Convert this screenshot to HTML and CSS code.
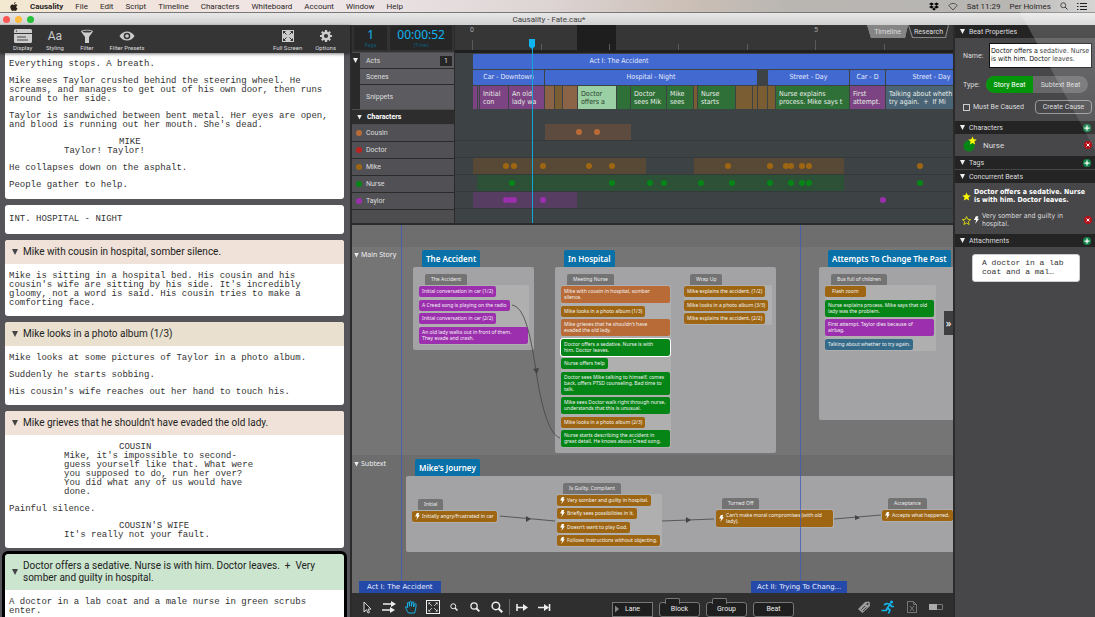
FILE: index.html
```html
<!DOCTYPE html>
<html lang="en-us">
  <head>
    <meta charset="utf-8">
    <meta name="viewport" content="width=device-width">
    <title>Causality - Fate.cau*</title>
    <link rel="stylesheet" href="styles.css">
  </head>
  <body>
    <svg class="defs" aria-hidden="true">
      <symbol id="bolt" viewBox="0 0 8 12"><path fill="currentColor" d="M3 0h4L5.500 4H8L2 12l1.500-6H0z"/></symbol>
      <symbol id="star" viewBox="0 0 24 24"><path d="M12 1.500l3.200 7.400 8 .7-6.100 5.300 1.900 7.900-7-4.200-7 4.200 1.900-7.900L.8 9.600l8-.7z"/></symbol>
      <symbol id="plus" viewBox="0 0 16 16"><circle cx="8" cy="8" r="8" fill="#14854a"/><path d="M8 3v10M3 8h10" stroke="#fff" stroke-width="2.500"/></symbol>
      <symbol id="cross" viewBox="0 0 16 16"><circle cx="8" cy="8" r="8" fill="#b5121b"/><path d="M5 5l6 6M11 5l-6 6" stroke="#fff" stroke-width="2"/></symbol>
      <symbol id="lens" viewBox="0 0 16 16"><circle cx="6.500" cy="6.500" r="5" fill="none" stroke="currentColor" stroke-width="2"/><path d="M10 10l5 5" stroke="currentColor" stroke-width="3"/></symbol>
      <symbol id="fit" viewBox="0 0 16 16"><path d="M6.500 6.500L3 3M9.500 6.500L13 3M6.500 9.500L3 13M9.500 9.500L13 13" stroke="currentColor"/><path fill="currentColor" d="M2 2h3L2 5zM14 2v3l-3-3zM2 14v-3l3 3zM14 14h-3l3-3z"/></symbol>
    </svg>

    <nav class="menubar">
      <svg class="apple" viewBox="0 0 16 18"><path fill="#2b2219" d="M11.300 0c.1 1.800-1.500 3.700-3.300 3.700C7.800 1.900 9.600.2 11.300 0zM15 13.200c-.9 2.300-2.300 4.600-3.900 4.600-1.100 0-1.500-.7-2.900-.7s-1.800.7-2.900.7C3 17.800.6 13 .6 9.800c0-3.200 2-5 4.100-5 1.300 0 2.400.8 3.300.8.800 0 2-.9 3.600-.9 1.300 0 2.500.7 3.100 1.700-3 1.800-2.500 5.700.3 6.800z"/></svg>
      <button class="menu app">Causality</button>
      <button class="menu">File</button>
      <button class="menu">Edit</button>
      <button class="menu">Script</button>
      <button class="menu">Timeline</button>
      <button class="menu">Characters</button>
      <button class="menu">Whiteboard</button>
      <button class="menu">Account</button>
      <button class="menu">Window</button>
      <button class="menu">Help</button>
      <div class="status">
        <svg class="tray" viewBox="0 0 20 18"><path d="M5 1l5 3-5 3-5-3zM15 1l5 3-5 3-5-3zM5 7l5 3-5 3-5-3zM15 7l5 3-5 3-5-3zM10 11.500l4 2.500-4 3-4-3z"/></svg>
        <svg class="tray" viewBox="0 0 20 16"><path fill="none" stroke="#333" stroke-width="1.500" d="M1.500 6C6 .5 14 .5 18.500 6L10 15z"/></svg>
        <span>Sat 11:29</span>
        <span>Per Holmes</span>
        <svg class="glass" viewBox="0 0 16 16"><circle cx="6.500" cy="6.500" r="5" fill="none" stroke="#333" stroke-width="1.600"/><path d="M10 10l5 5" stroke="#333" stroke-width="2"/></svg>
        <svg class="tray" viewBox="0 0 20 16"><path d="M0 2h3M0 8h3M0 14h3M6 2h14M6 8h14M6 14h14" stroke="#222" stroke-width="2"/></svg>
      </div>
    </nav>

    <header class="titlebar">
      <i class="light red"></i><i class="light amber"></i><i class="light green"></i>
      <h1>Causality - Fate.cau*</h1>
    </header>

    <div class="window">
      <section class="script">
        <div class="toolbar">
          <button class="tool">
            <svg viewBox="0 0 18 14"><path fill="#ccc" d="M1 0h16l1 1v3H0V1zM0 5h18v8l-1 1H1l-1-1z"/><path d="M3 8h9M3 11h11" stroke="#444"/><circle cx="2.500" cy="2" r=".8" fill="#444"/></svg>
            Display
          </button>
          <button class="tool">
            <span class="aa">Aa</span>
            Styling
          </button>
          <button class="tool">
            <svg viewBox="0 0 18 14"><path fill="#ccc" d="M3 2.500C3 0 15 0 15 2.500L11 8v6H7V8z"/><ellipse cx="9" cy="2.500" rx="4.500" ry="1" fill="#3a3a3a"/></svg>
            Filter
          </button>
          <button class="tool">
            <svg viewBox="0 0 18 14"><path fill="#ccc" d="M1.500 7C5 1 13 1 16.500 7 13 13 5 13 1.500 7z"/><circle cx="9" cy="7" r="3.300" fill="#353536"/><circle cx="9" cy="7" r="1.800" fill="#ccc"/></svg>
            Filter Presets
          </button>
          <button class="tool push">
            <svg viewBox="0 0 18 14"><path fill="#ccc" d="M3 1h12v12H3z"/><path d="M5 3l2.500 2.500M13 3l-2.500 2.500M5 11l2.500-2.500M13 11l-2.500-2.500" stroke="#333"/><path fill="#333" d="M4 2h3L4 5zM14 2v3l-3-3zM4 12V9l3 3zM14 12h-3l3-3z"/></svg>
            Full Screen
          </button>
          <button class="tool">
            <svg viewBox="0 0 18 14"><circle cx="9" cy="7" r="3.300" fill="none" stroke="#ccc" stroke-width="2.400"/><path stroke="#ccc" stroke-width="2.200" d="M9 1v2M9 11v2M3 7h2M13 7h2M4.800 2.800l1.400 1.400M11.800 9.800l1.400 1.400M13.200 2.800l-1.400 1.400M6.200 9.800l-1.400 1.400"/></svg>
            Options
          </button>
        </div>
        <div class="pages">
          <article class="card opening">
            <div class="text">
              <p>Everything stops. A breath.</p>
              <p>Mike sees Taylor crushed behind the steering wheel. He screams, and manages to get out of his own door, then runs around to her side.</p>
              <p>Taylor is sandwiched between bent metal. Her eyes are open, and blood is running out her mouth. She's dead.</p>
              <p class="cue">MIKE</p>
              <p class="speech">Taylor! Taylor!</p>
              <p>He collapses down on the asphalt.</p>
              <p>People gather to help.</p>
            </div>
          </article>
          <article class="card slug">
            <div class="text"><p>INT. HOSPITAL - NIGHT</p></div>
          </article>
          <article class="card">
            <h2 class="peach"><i class="tri"></i>Mike with cousin in hospital, somber silence.</h2>
            <div class="text">
              <p>Mike is sitting in a hospital bed. His cousin and his cousin's wife are sitting by his side. It's incredibly gloomy, not a word is said. His cousin tries to make a comforting face.</p>
            </div>
          </article>
          <article class="card">
            <h2 class="sand"><i class="tri"></i>Mike looks in a photo album (1/3)</h2>
            <div class="text">
              <p>Mike looks at some pictures of Taylor in a photo album.</p>
              <p>Suddenly he starts sobbing.</p>
              <p>His cousin's wife reaches out her hand to touch his.</p>
            </div>
          </article>
          <article class="card">
            <h2 class="peach"><i class="tri"></i>Mike grieves that he shouldn't have evaded the old lady.</h2>
            <div class="text">
              <p class="cue">COUSIN</p>
              <p class="speech">Mike, it's impossible to second-guess yourself like that. What were you supposed to do, run her over? You did what any of us would have done.</p>
              <p>Painful silence.</p>
              <p class="cue">COUSIN'S WIFE</p>
              <p class="speech">It's really not your fault.</p>
            </div>
          </article>
          <article class="card current">
            <h2 class="mint"><i class="tri"></i>Doctor offers a sedative. Nurse is with him. Doctor leaves. &nbsp;+&nbsp; Very somber and guilty in hospital.</h2>
            <div class="text">
              <p>A doctor in a lab coat and a male nurse in green scrubs enter.</p>
            </div>
          </article>
        </div>
      </section>

      <main class="stage">
        <section class="timeline">
          <div class="labels">
            <div class="counters">
              <div class="counter"><b>1</b><small>Page</small></div>
              <div class="counter wide"><b>00:00:52</b><small>(Time)</small></div>
            </div>
            <div class="levels">
              <i class="tri light-tri"></i>
              <div class="level">Acts <span class="depth">1</span></div>
              <div class="level">Scenes</div>
              <div class="level tall">Snippets</div>
            </div>
            <div class="people"><i class="tri light-tri"></i>Characters</div>
            <div class="person"><i class="dot cousin"></i>Cousin</div>
            <div class="person"><i class="dot doctor"></i>Doctor</div>
            <div class="person"><i class="dot mike"></i>Mike</div>
            <div class="person"><i class="dot nurse"></i>Nurse</div>
            <div class="person"><i class="dot taylor"></i>Taylor</div>
          </div>
          <div class="tracks">
            <div class="ruler">
              <i class="range" style="left:122px;width:39px"></i>
              <span class="mark" style="left:15px">0</span>
              <span class="mark" style="left:359px">5</span>
              <i class="tick long" style="left:17px"></i>
              <i class="tick" style="left:86px"></i>
              <i class="tick" style="left:154px"></i>
              <i class="tick" style="left:223px"></i>
              <i class="tick" style="left:292px"></i>
              <i class="tick long" style="left:360px"></i>
              <i class="tick" style="left:429px"></i>
              <div class="tabs">
                <button class="tab on">Timeline</button>
                <button class="tab">Research</button>
              </div>
            </div>
            <div class="row acts"><div class="clip fill">Act I: The Accident</div></div>
            <div class="row scenes">
              <div class="clip" style="width:71px">Car - Downtown</div>
              <div class="clip" style="width:212px">Hospital - Night</div>
              <div class="clip none" style="width:9px"></div>
              <div class="clip" style="width:81px">Street - Day</div>
              <div class="clip" style="width:35px">Car - D</div>
              <div class="clip fill street">Street - Day</div>
            </div>
            <div class="row snippets">
              <div class="snip s-taylor" style="width:4px"></div>
              <div class="snip s-taylor" style="width:1px"></div>
              <div class="snip s-taylor" style="width:28px">Initial con</div>
              <div class="snip s-taylor" style="width:35px">An old lady wa</div>
              <div class="snip s-cousin" style="width:9px"></div>
              <div class="snip s-mike" style="width:7px"></div>
              <div class="snip s-cousin" style="width:14px"></div>
              <div class="snip s-now" style="width:38px">Doctor offers a</div>
              <div class="snip s-nurse" style="width:13px"></div>
              <div class="snip s-nurse cut" style="width:35px">Doctor<br>sees Mik</div>
              <div class="snip s-nurse" style="width:26px">Mike sees</div>
              <div class="snip s-mike" style="width:3px"></div>
              <div class="snip s-nurse" style="width:37px">Nurse starts</div>
              <div class="snip s-mike" style="width:16px"></div>
              <div class="snip s-mike" style="width:4px"></div>
              <div class="snip s-mike" style="width:9px"></div>
              <div class="snip s-mike" style="width:7px"></div>
              <div class="snip s-nurse cut" style="width:73px">Nurse explains<br>process. Mike says t</div>
              <div class="snip s-taylor" style="width:35px">First attempt.</div>
              <div class="snip s-talk cut fill">Talking about wheth<br>try again. &nbsp;+&nbsp; If Mi</div>
            </div>
            <div class="lane head"></div>
            <div class="lane">
              <i class="band b-cousin" style="left:90px;width:86px"></i>
              <i class="dot cousin" style="left:121px"></i><i class="dot cousin" style="left:139px"></i>
            </div>
            <div class="lane"></div>
            <div class="lane">
              <i class="band b-mike" style="left:18px;width:173px"></i><i class="band b-mike" style="left:239px;width:150px"></i>
              <i class="dot mike" style="left:48px"></i><i class="dot mike" style="left:56px"></i><i class="dot mike" style="left:85px"></i><i class="dot mike" style="left:131px"></i><i class="dot mike" style="left:154px"></i><i class="dot mike" style="left:270px"></i><i class="dot mike" style="left:312px"></i><i class="dot mike" style="left:328px"></i><i class="dot mike" style="left:333px"></i><i class="dot mike" style="left:344px"></i><i class="dot mike" style="left:351px"></i><i class="dot mike" style="left:462px"></i>
            </div>
            <div class="lane">
              <i class="band b-nurse" style="left:22px;width:367px"></i>
              <i class="dot nurse" style="left:54px"></i><i class="dot nurse" style="left:154px"></i><i class="dot nurse" style="left:192px"></i><i class="dot nurse" style="left:206px"></i><i class="dot nurse" style="left:243px"></i><i class="dot nurse" style="left:274px"></i><i class="dot nurse" style="left:312px"></i><i class="dot nurse" style="left:333px"></i><i class="dot nurse" style="left:344px"></i><i class="dot nurse" style="left:351px"></i><i class="dot nurse" style="left:462px"></i>
            </div>
            <div class="lane">
              <i class="band b-taylor" style="left:18px;width:104px"></i>
              <i class="dot taylor" style="left:48px"></i><i class="dot taylor" style="left:53px"></i><i class="dot taylor" style="left:56px"></i><i class="dot taylor" style="left:85px"></i><i class="dot taylor" style="left:425px"></i>
            </div>
            <div class="playhead" style="left:77px"></div>
          </div>
        </section>

        <section class="board">
          <div class="strip"></div>
          <div class="story"><span class="story-name"><i class="tri light-tri"></i>Main Story</span></div>
          <div class="story sub"><span class="story-name"><i class="tri light-tri"></i>Subtext</span></div>

          <div class="block accident">
            <h3>The Accident</h3>
            <div class="area">
              <div class="scene">
                <h4>The Accident</h4>
                <div class="beats">
                  <p class="beat taylor">Initial conversation in car (1/2)</p>
                  <p class="beat taylor">A Creed song is playing on the radio</p>
                  <p class="beat taylor">Initial conversation in car (2/2)</p>
                  <p class="beat taylor long">An old lady walks out in front of them.<br>They evade and crash.</p>
                </div>
              </div>
            </div>
          </div>

          <div class="block hospital">
            <h3>In Hospital</h3>
            <div class="area">
              <div class="scene">
                <h4>Meeting Nurse</h4>
                <div class="beats">
                  <p class="beat cousin long">Mike with cousin in hospital, somber silence.</p>
                  <p class="beat mike">Mike looks in a photo album (1/3)</p>
                  <p class="beat cousin long">Mike grieves that he shouldn't have<br>evaded the old lady.</p>
                  <p class="beat nurse long picked">Doctor offers a sedative. Nurse is with<br>him. Doctor leaves.</p>
                  <p class="beat nurse">Nurse offers help</p>
                  <p class="beat nurse long">Doctor sees Mike talking to himself, comes back, offers PTSD counseling. Bad time to talk.</p>
                  <p class="beat nurse long">Mike sees Doctor walk right through nurse, understands that this is unusual.</p>
                  <p class="beat mike">Mike looks in a photo album (2/3)</p>
                  <p class="beat nurse long">Nurse starts describing the accident in great detail. He knows about Creed song.</p>
                </div>
              </div>
              <div class="scene">
                <h4>Wrap Up</h4>
                <div class="beats">
                  <p class="beat mike">Mike explains the accident. (1/2)</p>
                  <p class="beat mike">Mike looks in a photo album (3/3)</p>
                  <p class="beat mike">Mike explains the accident. (2/2)</p>
                </div>
              </div>
            </div>
          </div>

          <div class="block attempts">
            <h3>Attempts To Change The Past</h3>
            <div class="area">
              <div class="scene">
                <h4>Bus full of children</h4>
                <div class="beats">
                  <p class="beat mike roomy">Flash zoom</p>
                  <p class="beat nurse long">Nurse explains process. Mike says that old lady was the problem.</p>
                  <p class="beat taylor long">First attempt. Taylor dies because of<br>airbag.</p>
                  <p class="beat talk">Talking about whether to try again.</p>
                </div>
              </div>
            </div>
          </div>

          <div class="block journey">
            <h3>Mike's Journey</h3>
            <div class="area">
              <div class="scene initial">
                <h4>Initial</h4>
                <div class="beats"><p class="beat mike"><svg><use href="#bolt"/></svg>Initially angry/frustrated in car</p></div>
              </div>
              <div class="scene guilty">
                <h4>Is Guilty, Compliant</h4>
                <div class="beats">
                  <p class="beat mike"><svg><use href="#bolt"/></svg>Very somber and guilty in hospital.</p>
                  <p class="beat mike"><svg><use href="#bolt"/></svg>Briefly sees possibilities in it.</p>
                  <p class="beat mike"><svg><use href="#bolt"/></svg>Doesn't want to play God.</p>
                  <p class="beat mike"><svg><use href="#bolt"/></svg>Follows instructions without objecting.</p>
                </div>
              </div>
              <div class="scene turned">
                <h4>Turned Off</h4>
                <div class="beats"><p class="beat mike long"><svg><use href="#bolt"/></svg><span>Can't make moral compromises (with old lady).</span></p></div>
              </div>
              <div class="scene accept">
                <h4>Acceptance</h4>
                <div class="beats"><p class="beat mike"><svg><use href="#bolt"/></svg>Accepts what happened.</p></div>
              </div>
            </div>
          </div>

          <svg class="links">
            <g fill="none" stroke="#444" stroke-width=".8">
              <path d="M160 80c12 2 18 26 24 66s14 64 24 67"/>
              <path d="M148 291l55 5M310 296l52-2M482 294l47-4"/>
            </g>
            <path fill="#444" d="M181 144l6-1-2 6zM174 291l5 3-5 3zM334 292l5 3-5 3zM503 290l5 3-5 2z"/>
          </svg>
          <i class="guide" style="left:49px"></i>
          <i class="guide" style="left:448px"></i>
          <span class="act one">Act I: The Accident</span>
          <span class="act two">Act II: Trying To Chang...</span>
          <button class="drawer" aria-label="Hide properties">»</button>
        </section>

        <footer class="modes">
          <button class="mode" aria-label="Select"><svg viewBox="0 0 14 14"><path fill="#222" stroke="#ddd" d="M4 2v10l2.500-2.300L8 13l1.500-.7-1.500-3.200h3z"/></svg></button>
          <button class="mode" aria-label="Move in time"><svg viewBox="0 0 14 14"><path fill="none" stroke="#eee" stroke-width="1.600" d="M1 4h9M0 10h9"/><path fill="#eee" d="M9 1l5 3-5 3zM8 7l5 3-5 3z"/></svg></button>
          <button class="mode on" aria-label="Pan"><svg viewBox="0 0 14 14"><path fill="none" stroke="#13b5ea" stroke-linejoin="round" d="M4.500 13C3 11 1.800 8.500 1.500 7c.8-.8 1.600-.2 2.200 1L3.300 3c.6-1 1.500-.8 1.800.3l.5 3V2c.3-1 1.500-1 1.800 0v4.300L8.200 2.300c.5-1 1.600-.7 1.600.4L9.600 7l1-3c.6-.9 1.600-.5 1.500.5C12 8 11.500 10 10.500 13z"/></svg></button>
          <button class="mode boxed" aria-label="Fit"><svg viewBox="0 0 16 16"><use href="#fit"/></svg></button>
          <button class="mode" aria-label="Zoom out"><svg class="sm" viewBox="0 0 16 16"><use href="#lens"/></svg></button>
          <button class="mode" aria-label="Zoom normal"><svg class="md" viewBox="0 0 16 16"><use href="#lens"/></svg></button>
          <button class="mode" aria-label="Zoom in"><svg class="lg" viewBox="0 0 16 16"><use href="#lens"/></svg></button>
          <i class="rule"></i>
          <button class="mode" aria-label="From here"><svg viewBox="0 0 14 14"><path fill="none" stroke="#eee" stroke-width="1.600" d="M2 4v7M2 7.500h7"/><path fill="#eee" d="M8 4l5 3.500L8 11z"/></svg></button>
          <button class="mode" aria-label="To here"><svg viewBox="0 0 14 14"><path fill="none" stroke="#eee" stroke-width="1.600" d="M12.500 4v7M1 7.500h7"/><path fill="#eee" d="M7 4l5 3.500L7 11z"/></svg></button>
          <div class="adders">
            <button class="add lane-add"><i></i>Lane</button>
            <button class="add eared">Block</button>
            <button class="add eared">Group</button>
            <button class="add">Beat</button>
          </div>
          <div class="views">
            <button class="mode" aria-label="Tags"><svg viewBox="0 0 14 14"><path fill="#999" d="M1 9l7-7 4-.5.8 1L13 6l-7.500 7z"/><circle cx="10.500" cy="4" r="1" fill="#333"/><path d="M4.500 9.500l3.500-3.500M6 11l3.500-3.500" stroke="#444"/></svg></button>
            <button class="mode" aria-label="Play"><svg viewBox="0 0 14 14"><circle cx="10.500" cy="2" r="1.600" fill="#13b5ea"/><path fill="none" stroke="#13b5ea" stroke-width="1.700" stroke-linejoin="round" d="M3 5l2.500-1.500 3.500.5-2.500 4 2.500 2-1.500 3.500M6.500 8L5 10.500H.5M9 4l1.500 2.500H13"/></svg></button>
            <button class="mode" aria-label="Exclude"><svg viewBox="0 0 14 14"><path fill="none" stroke="#777" d="M2.500 1.500h6l3 3v8h-9zM8.500 1.500v3h3M5 6l4 5M9 6l-4 5"/></svg></button>
            <button class="mode" aria-label="Split"><svg viewBox="0 0 14 14"><path fill="none" stroke="#777" d="M.5 4.500h13v5H.5z"/><path fill="#aaa" d="M0 4h8v6H0z"/></svg></button>
          </div>
        </footer>
      </main>

      <aside class="props">
        <h2><i class="tri light-tri"></i>Beat Properties</h2>
        <form class="form">
          <div class="field">
            <label for="name">Name:</label>
            <textarea id="name" rows="2">Doctor offers a sedative. Nurse is with him. Doctor leaves.</textarea>
          </div>
          <div class="field">
            <span>Type:</span>
            <div class="pill">
              <button type="button" class="on">Story Beat</button>
              <button type="button">Subtext Beat</button>
            </div>
          </div>
          <div class="field last">
            <input type="checkbox" id="caused">
            <label for="caused">Must Be Caused</label>
            <button type="button" class="cause">Create Cause</button>
          </div>
        </form>
        <h2><i class="tri light-tri"></i>Characters<button class="round" aria-label="Add character"><svg><use href="#plus"/></svg></button></h2>
        <div class="who">
          <span class="badge"><svg viewBox="0 0 24 24"><use href="#star"/></svg></span>
          <span>Nurse</span>
          <button class="round" aria-label="Remove Nurse"><svg><use href="#cross"/></svg></button>
        </div>
        <h2><i class="tri light-tri"></i>Tags<button class="round" aria-label="Add tag"><svg><use href="#plus"/></svg></button></h2>
        <h2 class="next"><i class="tri light-tri"></i>Concurrent Beats</h2>
        <ul class="beat-list">
          <li class="main-beat"><svg class="star" viewBox="0 0 24 24"><use href="#star"/></svg><span>Doctor offers a sedative. Nurse is with him. Doctor leaves.</span></li>
          <li><svg class="star hollow" viewBox="0 0 24 24"><use href="#star"/></svg><svg class="bolt"><use href="#bolt"/></svg><span>Very somber and guilty in hospital.</span><button class="round" aria-label="Remove beat"><svg><use href="#cross"/></svg></button></li>
        </ul>
        <h2><i class="tri light-tri"></i>Attachments<button class="round" aria-label="Add attachment"><svg><use href="#plus"/></svg></button></h2>
        <div class="note">A doctor in a lab coat and a mal…</div>
      </aside>
    </div>
    <div class="glare"></div>
  </body>
</html>
```
FILE: styles.css
```css
* {
    box-sizing: border-box;
}
body {
    margin: 0;
    height: 100vh;
    display: flex;
    flex-direction: column;
    overflow: hidden;
    position: relative;
    background: #1c1c1d;
    color: #ddd;
    font-family: Roboto, "Liberation Sans", sans-serif;
    font-size: 8px;
}
h1, h2, h3, h4, p, ul {
    margin: 0;
    padding: 0;
    font-weight: normal;
}
button {
    margin: 0;
    padding: 0;
    border: 0;
    background: none;
    color: inherit;
    font: inherit;
}
svg {
    display: block;
}
.defs {
    position: absolute;
    width: 0;
    height: 0;
}
.tri {
    flex: none;
    width: 6px;
    height: 6px;
    background: #444;
    clip-path: polygon(0 0, 100% 0, 50% 100%);
}
.light-tri {
    background: #eee;
    width: 5px;
    height: 5px;
}

/* menu bar */
.menubar {
    flex: none;
    height: 12px;
    display: flex;
    align-items: center;
    gap: 12px;
    padding: 0 8px 0 10px;
    background: linear-gradient(90deg, #f3e8d0, #f1e3dc 12%, #efe6e8 30%, #ddd4d4 50%, #cbbfb6 63%, #b9b6b2 72%, #b8b6b3 92%, #d6d5d4);
    color: #2b2626;
    font-size: 8px;
}
.apple {
    width: 8px;
    height: 9px;
}
.app {
    font-weight: bold;
}
.status {
    margin-left: auto;
    display: flex;
    align-items: center;
    gap: 9px;
}
.tray {
    width: 10px;
    height: 9px;
}
.glass {
    width: 8px;
    height: 8px;
}
.titlebar {
    flex: none;
    position: relative;
    height: 13px;
    display: flex;
    align-items: center;
    gap: 5px;
    padding-left: 3px;
    border-top: 1px solid #777;
    background: linear-gradient(#e8e8e8, #d0d0d0);
}
.titlebar h1 {
    position: absolute;
    left: 3px;
    right: 0;
    text-align: center;
    color: #444;
    font-size: 8px;
}
.light {
    width: 7px;
    height: 7px;
    border-radius: 50%;
}
.light.red { background: #fc5753; }
.light.amber { background: #fdbc40; }
.light.green { background: #25c138; }

.window {
    flex: 1;
    min-height: 0;
    display: flex;
}

/* script pages */
.script {
    flex: none;
    width: 350px;
    display: flex;
    flex-direction: column;
    background: #555459;
}
.toolbar {
    flex: none;
    height: 28px;
    display: flex;
    gap: 13px;
    padding: 4px 14px 0 13px;
    background: #353536;
    box-shadow: 0 1px 3px rgba(0,0,0,.5);
    z-index: 1;
}
.tool {
    display: flex;
    flex-direction: column;
    align-items: center;
    gap: 1px;
    min-width: 19px;
    font-size: 6px;
    line-height: 7px;
}
.tool svg, .aa {
    width: 18px;
    height: 14px;
}
.aa {
    font-size: 12px;
    line-height: 14px;
    color: #ccc;
}
.push {
    margin-left: auto;
}
.pages {
    flex: 1;
    min-height: 0;
    overflow: hidden;
    display: flex;
    flex-direction: column;
    gap: 6px;
    padding: 0 6px 0 5px;
}
.card {
    flex: none;
    overflow: hidden;
    border-radius: 3px;
    background: #fff;
    color: #333;
}
.opening {
    border-radius: 0 0 3px 3px;
}
.current {
    outline: 3px solid #000;
}
.card h2 {
    display: flex;
    align-items: center;
    gap: 5px;
    padding: 6px 20px 6px 7px;
    color: #222;
    font-size: 10px;
    line-height: 12px;
}
.peach { background: #f0e2d8; }
.sand { background: #e9e0cf; }
.mint { background: #cbe5cf; }
.text {
    padding: 8px 16px 8px 4px;
    font: 9px/9px "Liberation Mono", "Courier New", monospace;
}
.text p + p {
    margin-top: 8px;
}
.text .cue {
    padding-left: 110px;
}
.text .speech {
    padding: 0 70px 0 55px;
}
.text .cue + .speech {
    margin-top: 0;
}
.opening .text {
    padding-top: 7px;
    padding-bottom: 9px;
}
.slug .text {
    padding-top: 10px;
    padding-bottom: 10px;
}

/* timeline */
.stage {
    flex: 1;
    min-width: 0;
    display: flex;
    flex-direction: column;
    padding: 0 2px;
    background: #2b2b2c;
}
.timeline {
    flex: none;
    height: 200px;
    display: flex;
    border-bottom: 2px solid #2b2b2c;
    background: #3d4345;
}
.labels {
    flex: none;
    width: 103px;
    display: flex;
    flex-direction: column;
    gap: 1px;
    background: #4d4d4f;
    border-right: 1px solid #2b2b2c;
}
.counters {
    height: 27px;
    display: flex;
    gap: 3px;
    padding: 1px 2px 2px;
    background: #333334;
}
.counter {
    width: 34px;
    display: flex;
    flex-direction: column;
    align-items: center;
    background: #262627;
    color: #10b4f0;
    font-family: "Noto Sans", sans-serif;
}
.counter.wide {
    width: 63px;
}
.counter b {
    font-size: 12px;
    line-height: 17px;
    font-weight: normal;
}
.counter small {
    font-size: 5px;
    line-height: 5px;
    color: #0c5f7c;
}
.levels {
    position: relative;
    display: flex;
    flex-direction: column;
    gap: 1px;
    padding-left: 8px;
    background: #29292a;
}
.levels .tri {
    position: absolute;
    left: 1px;
    top: 5px;
}
.level {
    height: 15px;
    display: flex;
    align-items: center;
    justify-content: space-between;
    padding: 0 2px 0 6px;
    background: #5b5b60;
    font-size: 7px;
}
.level.tall {
    height: 24px;
}
.depth {
    width: 12px;
    background: #262627;
    text-align: center;
    line-height: 10px;
}
.people {
    height: 14px;
    display: flex;
    align-items: center;
    gap: 5px;
    padding-left: 5px;
    background: #2d2d2e;
    color: #fff;
    font-size: 7px;
    font-weight: bold;
}
.person {
    height: 16px;
    display: flex;
    align-items: center;
    gap: 4px;
    padding-left: 4px;
    background: #515155;
    box-shadow: 0 1px #2b2b2c;
    font-size: 7px;
}
.dot {
    width: 6px;
    height: 6px;
    border-radius: 50%;
}
.cousin { background: #b86b36; }
.doctor { background: #ba2220; }
.mike { background: #9e6612; }
.nurse { background: #068517; }
.taylor { background: #9c2fae; }
.talk { background: #356b88; }

.tracks {
    flex: 1;
    min-width: 0;
    position: relative;
    overflow: hidden;
}
.ruler {
    position: relative;
    height: 28px;
    background: #363637;
    border-bottom: 3px solid #1f1f20;
}
.range {
    position: absolute;
    top: 0;
    bottom: 0;
    background: #1e1e1f;
}
.mark {
    position: absolute;
    top: 1px;
    font-size: 7px;
    color: #aaa;
}
.tick {
    position: absolute;
    bottom: 0;
    width: 1px;
    height: 6px;
    background: #5a5a5b;
}
.tick.long {
    height: 10px;
}
.tabs {
    position: absolute;
    top: 0;
    right: 4px;
    display: flex;
}
.tab {
    position: relative;
    width: 41px;
    height: 13px;
    font-size: 7px;
    z-index: 0;
}
.tab::before, .tab.on::after {
    content: "";
    position: absolute;
    inset: 0;
    z-index: -2;
    background: #858586;
    clip-path: polygon(0 0, 100% 0, 38px 100%, 4px 100%);
}
.tab::after {
    content: "";
    position: absolute;
    inset: 0 1px 1px;
    z-index: -1;
    background: #303031;
    clip-path: polygon(0 0, 100% 0, 36px 100%, 4px 100%);
}
.row {
    display: flex;
    gap: 1px;
    margin: 1px 0 0 18px;
}
.clip {
    flex: none;
    height: 15px;
    overflow: hidden;
    border-radius: 1px;
    background: #4169d0;
    color: #e4eaff;
    text-align: center;
    white-space: nowrap;
    font: 7px/15px "DejaVu Sans Condensed", "DejaVu Sans", sans-serif;
}
.clip.none {
    background: none;
}
.fill.clip, .fill.snip {
    flex: 1;
    min-width: 0;
}
.acts .clip {
    padding-right: 188px;
}
.street {
    padding-left: 24px;
}
.snip {
    flex: none;
    height: 23px;
    overflow: hidden;
    color: #e8eee8;
    font: 7px/8px "DejaVu Sans Condensed", "DejaVu Sans", sans-serif;
    padding-top: 4px;
}
.snip:not(:empty) {
    padding-left: 3px;
}
.cut {
    white-space: nowrap;
}
.s-taylor { background: #7c4482; }
.s-cousin { background: #8b6448; }
.s-mike { background: #7b5d33; }
.s-nurse { background: #2f7039; }
.s-now { background: #9bcfa4; color: #27402b; }
.s-talk { background: #4a6475; }
.lane {
    position: relative;
    height: 17px;
    border-bottom: 1px solid #34393b;
}
.lane.head {
    height: 15px;
    border: 0;
}
.band {
    position: absolute;
    top: 0;
    bottom: 0;
}
.b-cousin { background: #5d4b40; }
.b-mike { background: #574936; }
.b-nurse { background: #2c5136; }
.b-taylor { background: #563d61; }
.lane .dot {
    position: absolute;
    top: 5px;
}
.playhead {
    position: absolute;
    top: 20px;
    bottom: 0;
    width: 1px;
    background: #13a5d8;
}
.playhead::before {
    content: "";
    position: absolute;
    top: -6px;
    left: -3px;
    width: 6px;
    height: 10px;
    background: #10b4f0;
    clip-path: polygon(0 0, 100% 0, 100% 75%, 50% 100%, 0 75%);
}

/* whiteboard */
.board {
    flex: 1;
    min-height: 0;
    position: relative;
    overflow: hidden;
    display: flex;
    flex-direction: column;
    background: #6b6b6c;
    font-family: "Noto Sans", sans-serif;
}
.strip {
    flex: none;
    height: 22px;
    background: #6e6e6f;
}
.story {
    flex: none;
    height: 208px;
    padding: 2px;
    background: #757576;
}
.story.sub {
    flex: 1;
    background: #6d6d6e;
    padding-top: 3px;
}
.story-name {
    display: flex;
    align-items: center;
    gap: 2px;
    color: #eee;
    font-size: 7px;
    line-height: 12px;
}
.block {
    position: absolute;
    display: flex;
    flex-direction: column;
    align-items: flex-start;
}
.block h3 {
    margin-left: 9px;
    padding: 0 4px;
    border-radius: 2px 2px 0 0;
    background: #0a70a8;
    color: #fff;
    font-size: 8px;
    line-height: 17px;
    font-weight: 600;
    white-space: nowrap;
}
.area {
    display: flex;
    gap: 13px;
    align-items: flex-start;
    padding: 7px 6px 4px;
    border-radius: 2px;
    background: #a3a3a5;
}
.scene h4 {
    width: fit-content;
    margin-left: 6px;
    padding: 0 6px;
    border-radius: 2px 2px 0 0;
    background: #737374;
    color: #eee;
    font-size: 5px;
    line-height: 11px;
}
.beats {
    display: flex;
    flex-direction: column;
    align-items: flex-start;
    justify-content: space-between;
    padding: 1px 1px 1px 0;
    border-radius: 2px;
    background: #afafb0;
}
.beat {
    display: flex;
    align-items: center;
    gap: 2px;
    padding: 2px 3px 3px;
    border-radius: 2px;
    color: #f2f2f2;
    font-size: 5px;
    line-height: 6px;
    white-space: nowrap;
}
.beat.long {
    width: 109px;
    white-space: normal;
}
.beat.roomy {
    padding: 2px 7px 3px;
}
.beat svg {
    flex: none;
    width: 5px;
    height: 7px;
    margin-bottom: -1px;
    color: #fff;
}
.picked {
    outline: 1px solid #fff;
}
.accident { left: 61px; top: 25px; }
.accident .area { width: 121px; height: 83px; }
.accident .beats { width: 110px; height: 60px; }
.hospital { left: 203px; top: 25px; }
.hospital .area { width: 221px; height: 186px; }
.hospital .beats { width: 110px; height: 163px; }
.hospital .scene + .scene .beats { width: 88px; height: 40px; }
.attempts { left: 467px; top: 25px; }
.attempts .area { width: 200px; height: 153px; }
.attempts .beats { width: 111px; height: 66px; }
.journey { left: 54px; top: 234px; }
.journey .area { position: relative; width: 640px; height: 76px; }
.journey .scene { position: absolute; }
.initial { left: 6px; top: 23px; }
.guilty { left: 151px; top: 7px; }
.guilty .beats { width: 105px; height: 53px; }
.turned { left: 310px; top: 22px; }
.turned .beat.long { width: 117px; }
.accept { left: 476px; top: 22px; }
.links {
    position: absolute;
    inset: 0;
    width: 100%;
    height: 100%;
    pointer-events: none;
}
.guide {
    position: absolute;
    top: 0;
    bottom: 0;
    width: 1px;
    background: rgba(60, 90, 190, .75);
}
.act {
    position: absolute;
    bottom: 0;
    padding: 0 8px;
    background: #2449a8;
    color: #e4eaff;
    font: 7px/12px "DejaVu Sans", sans-serif;
    white-space: nowrap;
}
.one { left: 7px; }
.two { left: 399px; padding: 0 6px; }
.drawer {
    position: absolute;
    right: 0;
    top: 86px;
    width: 9px;
    height: 24px;
    background: #3f3f41;
    color: #fff;
    font-size: 11px;
    line-height: 20px;
}

/* bottom bar */
.modes {
    flex: none;
    height: 24px;
    display: flex;
    align-items: center;
    gap: 8px;
    padding: 4px 10px 0 8px;
    background: #2f2f30;
    color: #eee;
}
.mode svg {
    width: 14px;
    height: 14px;
}
.mode .sm {
    width: 8px;
    height: 8px;
    margin: 0 2px;
}
.mode .md {
    width: 10px;
    height: 10px;
    margin: 0 2px;
}
.mode .lg {
    width: 12px;
    height: 12px;
    margin: 0 1px;
}
.mode.boxed svg {
    border: 1px solid #eee;
}
.rule {
    width: 1px;
    height: 16px;
    margin: 0 -3px;
    background: #666;
}
.adders {
    display: flex;
    gap: 6px;
    margin: 4px 0 0 53px;
}
.add {
    position: relative;
    width: 41px;
    height: 15px;
    border: 1px solid #777;
    border-radius: 3px;
    background: #1f1f20;
    font-size: 7px;
}
.lane-add {
    border-radius: 0;
}
.lane-add i {
    position: absolute;
    left: 2px;
    top: 3px;
    width: 4px;
    height: 7px;
    background: #888;
    clip-path: polygon(0 0, 100% 50%, 0 100%);
}
.eared::before {
    content: "";
    position: absolute;
    left: 5px;
    top: -5px;
    width: 13px;
    height: 5px;
    border: 1px solid #777;
    border-bottom: 0;
    border-radius: 2px 2px 0 0;
    background: #1f1f20;
}
.views {
    display: flex;
    gap: 10px;
    margin-left: auto;
}

/* properties */
.props {
    flex: none;
    width: 140px;
    background: #47474a;
}
.props h2 {
    height: 13px;
    display: flex;
    align-items: center;
    gap: 4px;
    padding: 0 4px 0 5px;
    background: #242425;
    color: #ddd;
    font-size: 7px;
}
.props h2.next {
    margin-top: 1px;
}
.round {
    margin-left: auto;
}
.round svg {
    width: 8px;
    height: 8px;
}
.form {
    padding: 5px 3px 7px 8px;
    font-size: 7px;
}
.field {
    display: flex;
    align-items: center;
    justify-content: space-between;
    margin-bottom: 8px;
}
.field textarea {
    width: 103px;
    height: 25px;
    padding: 3px 0 3px 1px;
    border: 1px solid #111;
    background: #fff;
    color: #111;
    font: 7px/8px "DejaVu Sans Condensed", "DejaVu Sans", sans-serif;
    resize: none;
    overflow: hidden;
}
.pill {
    display: flex;
    margin-right: 4px;
    height: 17px;
    border-radius: 9px;
    overflow: hidden;
    background: #68686a;
}
.pill button {
    width: 55px;
}
.pill .on {
    width: 47px;
    background: #04950b;
    color: #fff;
}
.field.last {
    margin: -1px 0 0;
    justify-content: flex-start;
    gap: 3px;
}
.field input {
    appearance: none;
    width: 7px;
    height: 7px;
    margin: 0;
    border: 1px solid #ccc;
}
.cause {
    margin-left: auto;
    width: 57px;
    height: 14px;
    border: 1px solid #999;
    border-radius: 4px;
}
.who {
    height: 22px;
    display: flex;
    align-items: center;
    gap: 6px;
    padding: 0 3px 0 8px;
    font-size: 8px;
}
.badge {
    position: relative;
    width: 14px;
    height: 14px;
    background: radial-gradient(circle at 6px 8px, #068517 5px, transparent 6px);
}
.badge svg {
    position: absolute;
    right: 0;
    top: -2px;
    width: 9px;
    height: 9px;
    fill: #fdf900;
}
.beat-list {
    height: 51px;
    display: flex;
    flex-direction: column;
    justify-content: space-between;
    padding: 5px 3px 6px 7px;
    list-style: none;
    font: 7px/8px "DejaVu Sans Condensed", "DejaVu Sans", sans-serif;
}
.beat-list li {
    display: flex;
    align-items: center;
    gap: 3px;
}
.main-beat {
    color: #fff;
    font-weight: bold;
}
.beat-list .star {
    flex: none;
    width: 9px;
    height: 9px;
    fill: #fdf900;
}
.beat-list .hollow {
    fill: none;
    stroke: #fdf900;
    stroke-width: 2;
}
.beat-list .bolt {
    flex: none;
    width: 5px;
    height: 8px;
    color: #fff;
}
.note {
    width: 108px;
    margin: 7px 0 0 17px;
    padding: 3px 12px 5px 9px;
    border: 1px solid #ccc;
    border-radius: 3px;
    background: #fff;
    color: #333;
    font: 8px/9px "Liberation Mono", "Courier New", monospace;
}

/* diagonal screen reflection */
.glare {
    position: absolute;
    top: 12px;
    right: 0;
    width: 75px;
    height: 138px;
    pointer-events: none;
    background: linear-gradient(rgba(255,255,255,.22), rgba(255,255,255,.08));
    clip-path: polygon(0 0, 100% 0, 100% 100%);
}
```
